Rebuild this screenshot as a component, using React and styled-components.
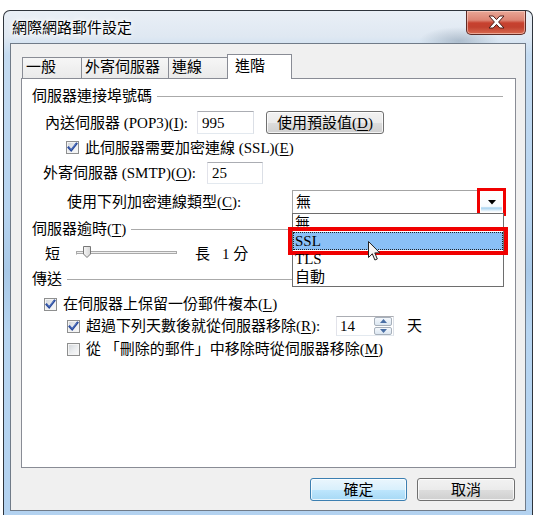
import React from "react";
import styled, { createGlobalStyle } from "styled-components";

const FONT = `"Liberation Serif", "Noto Sans CJK TC", serif`;

const Global = createGlobalStyle`
  html, body { margin: 0; padding: 0; background: #fff; overflow: hidden; }
  body { width: 538px; height: 515px; }
  *, *::before, *::after { box-sizing: border-box; }
`;

const Page = styled.div`
  width: 538px;
  height: 515px;
  padding: 10px 5px 0 3px;
  overflow: hidden;
`;

const Window = styled.div`
  width: 530px;
  height: 512px;
  border: 1px solid #2e343c;
  border-bottom: none;
  border-radius: 7px 7px 0 0;
  background:
    radial-gradient(ellipse 40px 14px at 455px 30px, rgba(120,140,160,0.45), rgba(120,140,160,0) 100%),
    linear-gradient(to bottom, #e9eff6 0px, #dfe8f2 26px, #c4dbf1 44px, #b7d4f0 200px, #a9c9e8 260px, #b7d5f1 320px, #b3d2f0 100%);
  display: flex;
  flex-direction: column;
  padding: 0 6px;
  font-family: ${FONT};
  font-size: 15px;
  color: #000;
`;

const TitleBar = styled.div`
  height: 32px;
  flex: none;
  display: flex;
  justify-content: space-between;
  align-items: flex-start;
`;

const Title = styled.div`
  margin: 7px 0 0 2px;
  line-height: 20px;
  font-size: 15px;
  letter-spacing: 0;
  text-shadow: 0 0 6px #fff, 0 0 3px #fff, 0 0 10px rgba(255,255,255,0.9);
`;

const CloseButton = styled.div`
  width: 60px;
  height: 24px;
  border: 1px solid #5e2a24;
  border-top: none;
  border-radius: 0 0 5px 5px;
  background: linear-gradient(to bottom, #e9a797 0%, #dc8473 40%, #c7412f 52%, #c2412f 70%, #d86a50 100%);
  box-shadow: inset 0 0 0 1px rgba(255, 220, 210, 0.55);
  display: flex;
  align-items: center;
  justify-content: center;
  padding-bottom: 2px;
`;

const Client = styled.div`
  height: 468px;
  flex: none;
  background: #f0f0f0;
  border: 1px solid #707b88;
  padding: 10px 9px 0 10px;
  display: flex;
  flex-direction: column;
`;

const TabRow = styled.div`
  display: flex;
  align-items: flex-end;
  height: 24px;
  padding-left: 1px;
  position: relative;
  z-index: 1;
`;

const Tab = styled.div`
  width: ${(p) => p.$w}px;
  height: ${(p) => (p.$active ? 25 : 21)}px;
  margin-bottom: ${(p) => (p.$active ? -1 : 0)}px;
  border: 1px solid #898c95;
  border-bottom: none;
  border-right-width: ${(p) => (p.$active ? 1 : 0)}px;
  background: ${(p) => (p.$active ? "#fff" : "linear-gradient(to bottom, #f6f6f6, #eaeaea)")};
  padding: ${(p) => (p.$active ? "2px 0 0 7px" : "0 0 0 3px")};
  line-height: 19px;
  white-space: nowrap;
`;

const Panel = styled.div`
  height: 390px;
  flex: none;
  background: #fff;
  border: 1px solid #898c95;
  padding: 6px 12px 0 10px;
  display: flex;
  flex-direction: column;
`;

const Row = styled.div`
  display: flex;
  align-items: center;
  height: ${(p) => p.$h}px;
  flex: none;
  padding-left: ${(p) => p.$indent || 0}px;
  position: relative;
  line-height: 18px;
  white-space: nowrap;
`;

const GroupRule = styled.div`
  flex: 1;
  height: 1px;
  background: #aaaaaa;
  margin-left: 5px;
`;

const Label = styled.span`
  display: inline-block;
  flex: none;
  width: ${(p) => (p.$w ? `${p.$w}px` : "auto")};
  margin-left: ${(p) => p.$ml || 0}px;
  white-space: nowrap;
`;

const Key = styled.span`
  text-decoration: underline;
  text-underline-offset: 2px;
`;

const TextBox = styled.div`
  width: ${(p) => p.$w}px;
  height: ${(p) => p.$h}px;
  flex: none;
  border: 1px solid;
  border-color: #abadb3 #dbdfe6 #e3e9ef #e2e3ea;
  background: #fff;
  padding-left: 4px;
  display: flex;
  align-items: center;
`;

const Button = styled.div`
  width: ${(p) => p.$w}px;
  height: 23px;
  flex: none;
  margin-left: ${(p) => p.$ml || 0}px;
  border: 1px solid ${(p) => (p.$default ? "#3c7fb1" : "#707070")};
  border-radius: 3px;
  background: ${(p) =>
    p.$default
      ? "linear-gradient(to bottom, #eaf6fd 0%, #d9f0fc 50%, #bee6fd 51%, #a7d9f5 100%)"
      : "linear-gradient(to bottom, #f2f2f2 0%, #ebebeb 50%, #dddddd 51%, #cfcfcf 100%)"};
  box-shadow: inset 0 0 0 1px rgba(255, 255, 255, 0.75);
  display: flex;
  align-items: center;
  justify-content: center;
  line-height: 18px;
`;

const CheckBox = styled.span`
  width: 13px;
  height: 13px;
  flex: none;
  border: 1px solid #8e8f8f;
  background: linear-gradient(135deg, #cfd3d8 0%, #eceef0 55%, #fafafa 100%);
  box-shadow: inset 0 0 0 1px #f4f4f4;
  display: flex;
  align-items: center;
  justify-content: center;
`;

const CheckText = styled.span`
  margin-left: ${(p) => p.$gap || 5}px;
  white-space: nowrap;
`;

const Combo = styled.div`
  position: relative;
  width: 212px;
  height: 24px;
  flex: none;
  border: 1px solid #a4a4a4;
  background: #fff;
  display: flex;
  align-items: center;
  padding-left: 3px;
`;

const ComboValue = styled.span`
  flex: 1;
`;

const DropButton = styled.div`
  width: 21px;
  height: 20px;
  margin-right: 1px;
  background: linear-gradient(to bottom, #ffffff 0%, #f7fbfe 72%, #a6d2ef 80%, #c9e4f6 88%, #ffffff 100%);
  display: flex;
  align-items: center;
  justify-content: center;
  outline: 3px solid #f00000;
  outline-offset: 1px;
`;

const DropList = styled.div`
  position: absolute;
  left: -1px;
  top: 22px;
  width: 212px;
  border: 1px solid #6e6e6e;
  background: #fff;
  z-index: 5;
  display: flex;
  flex-direction: column;
`;

const Option = styled.div`
  height: 18px;
  line-height: 16px;
  padding-left: 1px;
  border: 1px ${(p) => (p.$sel ? "dotted #222" : "solid transparent")};
  background: ${(p) => (p.$sel ? "#8ac0f6" : "transparent")};
  outline: ${(p) => (p.$sel ? "4px solid #f00000" : "none")};
  outline-offset: 1px;
  position: relative;
`;

const Cursor = styled.svg`
  position: absolute;
  left: 75px;
  top: 27px;
  z-index: 6;
`;

const Spin = styled.div`
  width: 58px;
  height: 20px;
  flex: none;
  margin-left: ${(p) => p.$ml || 0}px;
  border: 1px solid;
  border-color: #abadb3 #dbdfe6 #e3e9ef #e2e3ea;
  background: #fff;
  display: flex;
`;

const SpinValue = styled.span`
  flex: 1;
  padding-left: 3px;
  line-height: 18px;
`;

const SpinButtons = styled.div`
  width: 19px;
  display: flex;
  flex-direction: column;
  gap: 1px;
  padding: 0 1px 0 0;
`;

const SpinButton = styled.div`
  flex: 1;
  border: 1px solid #a7b0bb;
  border-radius: 2px;
  background: linear-gradient(to bottom, #f4f8fc, #dbe6f1);
  display: flex;
  align-items: center;
  justify-content: center;
`;

const Footer = styled.div`
  display: flex;
  justify-content: flex-end;
  gap: 10px;
  padding: 10px 1px 0 0;
`;

const Check = ({ on }) => (
  <CheckBox>
    {on && (
      <svg width="11" height="11" viewBox="0 0 11 11">
        <path d="M1.6 5.6 L4.2 8.4 L9.4 1.8" fill="none" stroke="#27489a" strokeWidth="2.2" strokeLinecap="square" />
        <path d="M1.9 5.2 L4.2 7.6 L9 1.6" fill="none" stroke="#6f8fd6" strokeWidth="0.7" />
      </svg>
    )}
  </CheckBox>
);

const Arrow = ({ up }) => (
  <svg width="7" height="4" viewBox="0 0 7 4">
    <path d={up ? "M0 4 L3.5 0 L7 4 Z" : "M0 0 L7 0 L3.5 4 Z"} fill="#4a6fa5" />
  </svg>
);

export default function App() {
  return (
    <>
      <Global />
      <Page>
        <Window>
          <TitleBar>
            <Title>網際網路郵件設定</Title>
            <CloseButton>
              <svg width="17" height="14" viewBox="0 0 17 14">
                <path
                  d="M1 1 H5.2 L8.5 4.6 L11.8 1 H16 L10.6 7 L16 13 H11.8 L8.5 9.4 L5.2 13 H1 L6.4 7 Z"
                  fill="#ffffff"
                  stroke="#4a1f1a"
                  strokeWidth="1"
                  strokeLinejoin="round"
                />
              </svg>
            </CloseButton>
          </TitleBar>
          <Client>
            <TabRow>
              <Tab $w={59} $first>一般</Tab>
              <Tab $w={87}>外寄伺服器</Tab>
              <Tab $w={59}>連線</Tab>
              <Tab $w={65} $active>進階</Tab>
            </TabRow>
            <Panel>
              <Row $h={22}>
                <Label>伺服器連接埠號碼</Label>
                <GroupRule />
              </Row>
              <Row $h={31} $indent={13}>
                <Label $w={152}>內送伺服器 (POP3)(<Key>I</Key>):</Label>
                <TextBox $w={57} $h={23}>995</TextBox>
                <Button $w={118} $ml={12}>使用預設值(<Key>D</Key>)</Button>
              </Row>
              <Row $h={19} $indent={34}>
                <Check on />
                <CheckText $gap={6}>此伺服器需要加密連線 (SSL)(<Key>E</Key>)</CheckText>
              </Row>
              <Row $h={32} $indent={11}>
                <Label $w={164}>外寄伺服器 (SMTP)(<Key>O</Key>):</Label>
                <TextBox $w={56} $h={22}>25</TextBox>
              </Row>
              <Row $h={26} $indent={35}>
                <Label $w={225}>使用下列加密連線類型(<Key>C</Key>):</Label>
                <Combo>
                  <ComboValue>無</ComboValue>
                  <DropButton>
                    <svg width="8" height="5" viewBox="0 0 8 5">
                      <path d="M0 0 H8 L4 4.5 Z" fill="#000" />
                    </svg>
                  </DropButton>
                  <DropList>
                    <Option>無</Option>
                    <Option $sel>SSL</Option>
                    <Option>TLS</Option>
                    <Option>自動</Option>
                    <Cursor width="13" height="21" viewBox="0 0 13 21">
                      <path
                        d="M0.5 0.5 V16.5 L4.3 12.8 L6.9 19 L9.3 18 L6.8 11.9 H11.8 Z"
                        fill="#f4f4f4"
                        stroke="#222"
                        strokeWidth="1"
                        strokeLinejoin="miter"
                      />
                    </Cursor>
                  </DropList>
                </Combo>
              </Row>
              <Row $h={28}>
                <Label>伺服器逾時(<Key>T</Key>)</Label>
                <GroupRule />
              </Row>
              <Row $h={22} $indent={13}>
                <Label>短</Label>
                <svg width="104" height="16" viewBox="0 0 104 16" style={{ marginLeft: 15 }}>
                  <path d="M1.5 8.5 V5.5 H3" fill="none" stroke="#9a9a9a" />
                  <rect x="1.5" y="5.5" width="100" height="2" fill="#eeeeee" stroke="#a9a9a9" />
                  <defs>
                    <linearGradient id="thumb" x1="0" y1="0" x2="1" y2="0">
                      <stop offset="0" stopColor="#f6f6f6" />
                      <stop offset="1" stopColor="#d6d6d6" />
                    </linearGradient>
                  </defs>
                  <path d="M8.5 0.5 H15.5 V8 L12 11.5 L8.5 8 Z" fill="url(#thumb)" stroke="#787878" />
                </svg>
                <Label $ml={16}>長</Label>
                <Label $ml={12}>1 分</Label>
              </Row>
              <Row $h={28}>
                <Label>傳送</Label>
                <GroupRule />
              </Row>
              <Row $h={22} $indent={12}>
                <Check on />
                <CheckText $gap={6}>在伺服器上保留一份郵件複本(<Key>L</Key>)</CheckText>
              </Row>
              <Row $h={22} $indent={35}>
                <Check on />
                <CheckText $gap={6}>
                  <Label $w={250}>超過下列天數後就從伺服器移除(<Key>R</Key>):</Label>
                </CheckText>
                <Spin>
                  <SpinValue>14</SpinValue>
                  <SpinButtons>
                    <SpinButton><Arrow up /></SpinButton>
                    <SpinButton><Arrow /></SpinButton>
                  </SpinButtons>
                </Spin>
                <Label $ml={13}>天</Label>
              </Row>
              <Row $h={24} $indent={35}>
                <Check />
                <CheckText $gap={6}>從 「刪除的郵件」中移除時從伺服器移除(<Key>M</Key>)</CheckText>
              </Row>
            </Panel>
            <Footer>
              <Button $w={97} $default>確定</Button>
              <Button $w={98}>取消</Button>
            </Footer>
          </Client>
        </Window>
      </Page>
    </>
  );
}
